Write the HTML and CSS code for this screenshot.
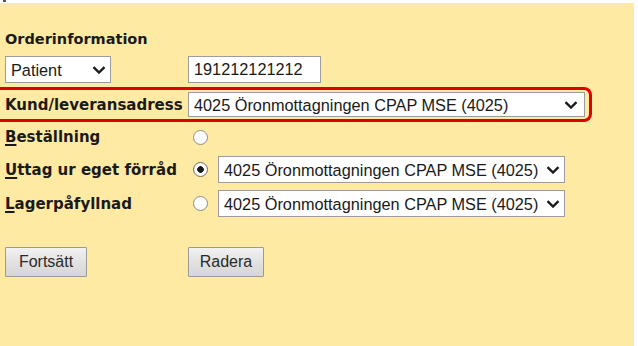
FILE: index.html
```html
<!DOCTYPE html>
<html lang="sv">
<head>
<meta charset="utf-8">
<title>Orderinformation</title>
<link rel="stylesheet" href="styles.css">
</head>
<body>
<div class="topstrip"><span class="mark"></span></div>
<div class="page">
  <div class="heading">Orderinformation</div>

  <div class="row row-first">
    <div class="label-col">
      <span class="select-wrap sel-patient">
        <select class="sel"><option>Patient</option></select>
        <svg class="chev" viewBox="0 0 14 8" width="14" height="8"><path d="M1.5 1.2 L7 6.5 L12.5 1.2" fill="none" stroke="#1a1a1a" stroke-width="2.4"/></svg>
      </span>
    </div>
    <input class="txt" type="text" value="191212121212">
  </div>

  <div class="row row-kund">
    <div class="label-col label">Kund/leveransadress</div>
    <span class="select-wrap sel-kund">
      <select class="sel"><option>4025 Öronmottagningen CPAP MSE (4025)</option></select>
      <svg class="chev" viewBox="0 0 14 8" width="14" height="8"><path d="M1.5 1.2 L7 6.5 L12.5 1.2" fill="none" stroke="#1a1a1a" stroke-width="2.4"/></svg>
    </span>
  </div>

  <div class="row row-best">
    <div class="label-col label"><u>B</u>eställning</div>
    <input class="radio" type="radio" name="typ">
  </div>

  <div class="row row-uttag">
    <div class="label-col label"><u>U</u>ttag ur eget förråd</div>
    <input class="radio" type="radio" name="typ" checked>
    <span class="select-wrap sel-small">
      <select class="sel"><option>4025 Öronmottagningen CPAP MSE (4025)</option></select>
      <svg class="chev" viewBox="0 0 14 8" width="14" height="8"><path d="M1.5 1.2 L7 6.5 L12.5 1.2" fill="none" stroke="#1a1a1a" stroke-width="2.4"/></svg>
    </span>
  </div>

  <div class="row row-lager">
    <div class="label-col label"><u>L</u>agerpåfyllnad</div>
    <input class="radio" type="radio" name="typ">
    <span class="select-wrap sel-small">
      <select class="sel"><option>4025 Öronmottagningen CPAP MSE (4025)</option></select>
      <svg class="chev" viewBox="0 0 14 8" width="14" height="8"><path d="M1.5 1.2 L7 6.5 L12.5 1.2" fill="none" stroke="#1a1a1a" stroke-width="2.4"/></svg>
    </span>
  </div>

  <div class="row row-buttons">
    <div class="label-col"><button class="btn btn-fortsatt">Fortsätt</button></div>
    <button class="btn btn-radera">Radera</button>
  </div>
</div>
</body>
</html>
```
FILE: styles.css
```css
html, body {
  margin: 0;
  padding: 0;
  background: #ffffff;
}
body {
  width: 638px;
  height: 346px;
  overflow: hidden;
  font-family: "DejaVu Sans", Verdana, sans-serif;
  color: #1a1a1a;
}
.topstrip {
  height: 3px;
  position: relative;
  background: #ffffff;
}
.mark {
  position: absolute;
  left: 3px;
  top: 0;
  width: 3px;
  height: 2px;
  background: #555;
}
.page {
  width: 634px;
  height: 343px;
  box-sizing: border-box;
  background: #ffeaa4;
  padding-top: 28px;
}
.heading {
  padding-left: 5px;
  font-weight: bold;
  font-size: 14.5px;
  line-height: 17px;
  height: 16px;
}
.row {
  display: flex;
  align-items: center;
  padding-left: 5px;
}
.label-col {
  width: 183px;
  flex: none;
  display: flex;
  align-items: center;
}
.label {
  font-weight: bold;
  font-size: 15px;
  white-space: nowrap;
}
.label u {
  text-decoration-thickness: 2px;
  text-underline-offset: 2px;
}
.row-first {
  margin-top: 9px;
  height: 27px;
}
.row-kund {
  margin-top: 4px;
  width: 592px;
  box-sizing: border-box;
  height: 35px;
  border: 3px solid #e10000;
  border-left: none;
  border-radius: 0 8px 8px 0;
}
.row-best {
  margin-top: 4px;
  height: 22px;
}
.row-uttag {
  margin-top: 8px;
  height: 27px;
}
.row-lager {
  margin-top: 7px;
  height: 27px;
}
.row-buttons {
  margin-top: 30px;
  height: 30px;
}

.select-wrap {
  position: relative;
  display: inline-block;
}
.sel {
  -webkit-appearance: none;
  appearance: none;
  display: block;
  box-sizing: border-box;
  margin: 0;
  background: #ffffff;
  border: 1px solid #9c9c9c;
  border-radius: 0;
  font-family: "Liberation Sans", Arial, sans-serif;
  font-size: 16.3px;
  color: #1a1a1a;
  padding: 0 0 0 5px;
  outline: none;
}
.chev {
  position: absolute;
  top: 50%;
  margin-top: -4px;
  right: 6px;
  pointer-events: none;
}
.sel-patient .sel {
  width: 106px;
  height: 27px;
}
.sel-patient .chev {
  right: 5px;
}
.sel-kund .sel {
  width: 397px;
  height: 25px;
}
.sel-kund .chev {
  right: 7px;
}
.sel-small {
  margin-left: 10px;
}
.sel-small .sel {
  width: 347px;
  height: 27px;
}
.sel-small .chev {
  right: 5px;
}
.txt {
  box-sizing: border-box;
  width: 133px;
  height: 27px;
  margin: 0;
  border: 1px solid #9c9c9c;
  background: #ffffff;
  font-family: "Liberation Sans", Arial, sans-serif;
  font-size: 16.3px;
  color: #1a1a1a;
  padding: 0 0 0 5px;
  outline: none;
}
.radio {
  -webkit-appearance: none;
  appearance: none;
  box-sizing: border-box;
  width: 15px;
  height: 15px;
  margin: 0 0 0 5px;
  border: 1px solid #8e8e8e;
  border-radius: 50%;
  background: radial-gradient(circle at 50% 40%, #ffffff 55%, #ececec 100%);
  flex: none;
}
.radio:checked {
  border-color: #6e6e6e;
  background: radial-gradient(circle, #1a1a1a 0, #1a1a1a 3px, #ffffff 3.6px, #f2f2f2 100%);
}
.btn {
  box-sizing: border-box;
  height: 30px;
  margin: 0;
  border: 1px solid #9a9a9a;
  border-radius: 1px;
  background: linear-gradient(#f2f2f2, #e2e2e2 50%, #d6d6d6);
  font-family: "Liberation Sans", Arial, sans-serif;
  font-size: 16px;
  color: #2a2a2a;
  padding: 0;
}
.btn-fortsatt {
  width: 82px;
}
.btn-radera {
  width: 76px;
}
```
